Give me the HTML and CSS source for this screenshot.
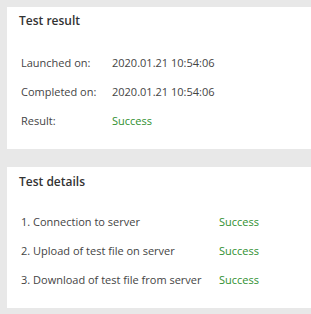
FILE: index.html
```html
<!DOCTYPE html>
<html lang="en">
<head>
  <meta charset="UTF-8" />
  <title>Test result</title>
  <link rel="stylesheet" href="styles.css">
</head>
<body>

<div class="card">
  <h3>Test result</h3>
  <table class="info">
    <tr><td class="label">Launched on:</td><td>2020.01.21 10:54:06</td></tr>
    <tr><td class="label">Completed on:</td><td>2020.01.21 10:54:06</td></tr>
    <tr><td class="label">Result:</td><td class="ok">Success</td></tr>
  </table>
</div>

<div class="card details">
  <h3>Test details</h3>
  <table class="info">
    <tr><td class="step">1. Connection to server</td><td class="ok">Success</td></tr>
    <tr><td class="step">2. Upload of test file on server</td><td class="ok">Success</td></tr>
    <tr><td class="step">3. Download of test file from server</td><td class="ok">Success</td></tr>
  </table>
</div>

</body>
</html>
```
FILE: styles.css
```css
body { font-family: "Open Sans", Arial, sans-serif; margin: 0; background: #e8e8e8; color: #444; font-size: 11px; padding: 7px 0 0 7px; }
.card { background: #fff; padding: 6px 0 14px 12px; }
.card + .card { margin-top: 18px; }
h3 { margin: 0; font-size: 12px; font-weight: 600; line-height: 16px; color: #333; }
.info { border-collapse: collapse; margin: 19px 0 0 2px; }
.details .info { margin-top: 17px; }
.details h3 { padding-top: 1px; }
.info td { padding: 0; height: 29px; line-height: 16px; white-space: nowrap; }
.label { width: 91px; }
.step { width: 198px; }
.ok { color: #2f8f2f; }
```
